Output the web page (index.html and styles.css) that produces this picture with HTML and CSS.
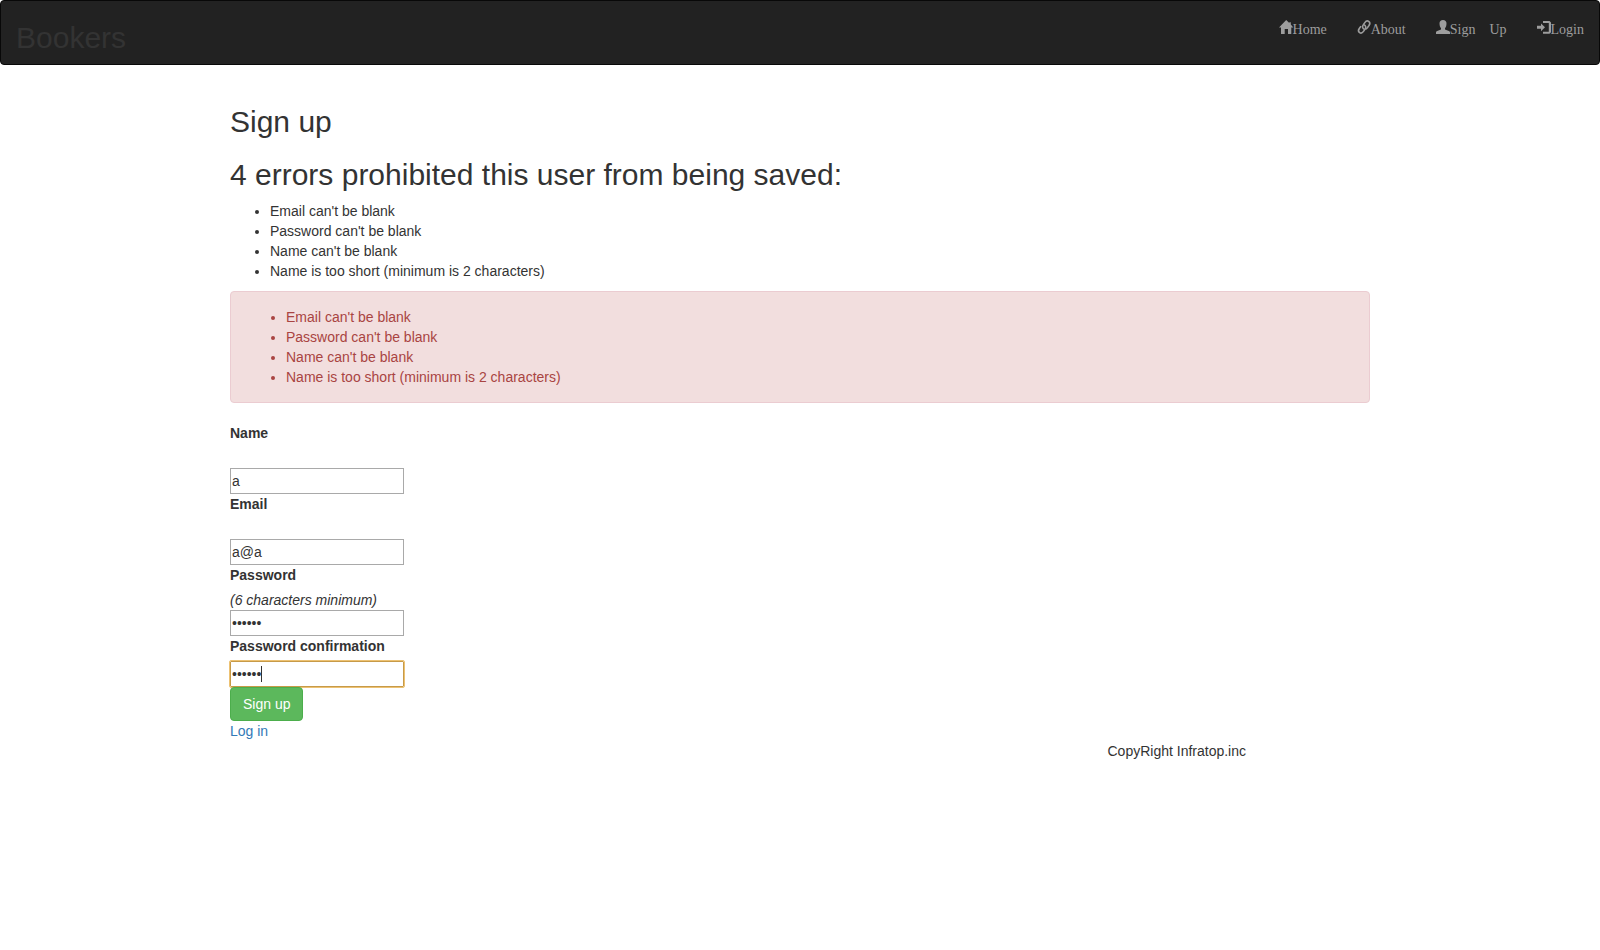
FILE: index.html
```html
<!DOCTYPE html>
<html lang="en">
<head>
<meta charset="utf-8">
<title>Bookers</title>
<link rel="stylesheet" href="styles.css">
</head>
<body>
<header class="navbar">
  <h2 class="brand">Bookers</h2>
  <nav>
    <ul class="nav-list">
      <li><a class="nav-link" href="#"><svg class="icon" viewBox="0 0 14 14" aria-hidden="true"><path d="M7.200 0 10.300 3.100V2.200H11.800V4.600L14.300 7.500H12.300V14H9V9H5.700V14H2V7.500H0Z"/></svg><span>Home</span></a></li>
      <li><a class="nav-link" href="#"><svg class="icon" viewBox="0 0 14 14" aria-hidden="true"><g class="chain"><path d="M7.300 9.200C5.500 8.500 5 6.500 6.200 4.900L7.800 2.600C8.900 1 10.500.5 11.700 1.300S13 4 12 5.500L10.300 7.900C9.800 8.600 9.200 9 8.500 9.200"/><path d="M7 4.800C8.800 5.500 9.300 7.500 8.100 9.100L6.500 11.400C5.400 13 3.800 13.500 2.600 12.700S1.300 10 2.300 8.500L4 6.100"/></g></svg><span>About</span></a></li>
      <li><a class="nav-link" href="#"><svg class="icon" viewBox="0 0 14 14" aria-hidden="true"><path d="M7 0C9.200 0 10.500 1.300 10.500 3.300C10.500 5.500 10 7.300 9 8.300V9.400L12.800 11C13.700 11.400 14 11.800 14 12.600V14H0V12.600C0 11.800.3 11.400 1.200 11L5 9.400V8.300C4 7.300 3.500 5.500 3.500 3.300C3.500 1.300 4.800 0 7 0Z"/></svg><span>Sign</span><span class="word">Up</span></a></li>
      <li><a class="nav-link" href="#"><svg class="icon" viewBox="0 0 14 14" aria-hidden="true"><path d="M0 5.800H4V3.400L8 7.300 4 11.200V8.800H0ZM6 1H12.500L14 2.500V12.300L12.500 13.800H6V11.800H11.800V3H6Z"/></svg><span>Login</span></a></li>
    </ul>
  </nav>
</header>

<main class="container">
  <h2>Sign up</h2>
  <form action="#">
    <h2>4 errors prohibited this user from being saved:</h2>
    <ul class="errors">
      <li>Email can't be blank</li>
      <li>Password can't be blank</li>
      <li>Name can't be blank</li>
      <li>Name is too short (minimum is 2 characters)</li>
    </ul>
    <div class="alert">
      <ul>
        <li>Email can't be blank</li>
        <li>Password can't be blank</li>
        <li>Name can't be blank</li>
        <li>Name is too short (minimum is 2 characters)</li>
      </ul>
    </div>
    <div class="field spaced">
      <label for="name">Name</label>
      <input id="name" type="text" value="a">
    </div>
    <div class="field spaced">
      <label for="email">Email</label>
      <input id="email" type="email" value="a@a">
    </div>
    <div class="field">
      <label for="password">Password</label>
      <em>(6 characters minimum)</em>
      <input id="password" type="password" value="secret">
    </div>
    <div class="field">
      <label for="confirmation">Password confirmation</label>
      <div class="active">
        <input id="confirmation" type="password" value="secret">
        <span class="caret"></span>
      </div>
    </div>
    <button class="submit" type="submit">Sign up</button>
  </form>
  <a class="login" href="#">Log in</a>
</main>

<footer class="container">
  <p class="copyright">CopyRight Infratop.inc</p>
</footer>
</body>
</html>
```

FILE: styles.css
```css
* {
  box-sizing: border-box;
}

body {
  margin: 0;
  background: #fff;
  color: #333;
  font: 14px/20px "Liberation Sans", Arial, sans-serif;
}

h2 {
  margin: 20px 0 10px;
  font-size: 30px;
  font-weight: 500;
  line-height: 33px;
}

ul {
  margin: 0;
  padding-left: 40px;
}

.navbar {
  display: flex;
  justify-content: space-between;
  margin-bottom: 20px;
  background: #222;
  border: 1px solid #080808;
  border-radius: 4px;
}

.brand {
  padding-left: 15px;
}

.nav-list {
  display: flex;
  padding: 0;
  list-style: none;
}

.nav-link {
  display: flex;
  padding: 19px 15px;
  color: #9d9d9d;
  font-family: "Liberation Serif", "Times New Roman", serif;
  line-height: 20px;
  text-decoration: none;
}

.icon {
  width: 14px;
  height: 14px;
  fill: currentColor;
  overflow: visible;
}

.chain {
  fill: none;
  stroke: currentColor;
  stroke-width: 1.6;
}

.word {
  margin-left: 14px;
}

.container {
  max-width: 1170px;
  margin: 0 auto;
  padding: 0 15px;
  display: flow-root;
}

.errors {
  margin-bottom: 10px;
}

.alert {
  margin-bottom: 20px;
  padding: 15px;
  color: #a94442;
  background: #f2dede;
  border: 1px solid #ebccd1;
  border-radius: 4px;
}

.field {
  display: flex;
  flex-direction: column;
  align-items: flex-start;
}

.field label {
  margin-bottom: 5px;
  font-weight: 700;
}

.spaced label {
  margin-bottom: 25px;
}

.field input {
  display: block;
  width: 174px;
  height: 26px;
  padding: 1px;
  color: #333;
  background: #fff;
  border: 1px solid #a9a9a9;
  border-radius: 0;
  font: inherit;
}

.active {
  position: relative;
}

.active input {
  border-color: #c79a48;
  outline: 1px solid #edc273;
  outline-offset: 0;
  border-radius: 1px;
}

.caret {
  position: absolute;
  top: 5px;
  left: 31px;
  width: 1px;
  height: 16px;
  background: #333;
}

.submit {
  position: relative;
  display: block;
  padding: 6px 12px;
  color: #fff;
  background: #5cb85c;
  border: 1px solid #4cae4c;
  border-radius: 4px;
  font: inherit;
}

.login {
  color: #337ab7;
  text-decoration: none;
}

.copyright {
  margin: 0 0 10px 75%;
  padding-left: 15px;
}

footer.container {
  padding: 0;
}
```
